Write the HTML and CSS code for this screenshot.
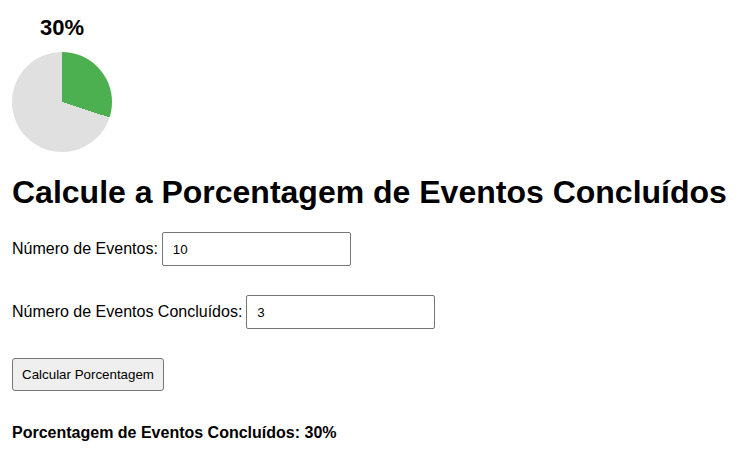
FILE: index.html
```html
<!DOCTYPE html>
<html lang="pt">
<head>
<meta charset="utf-8">
<title>Porcentagem de Eventos</title>
<link rel="stylesheet" href="styles.css">
</head>
<body>
<div class="chart">
  <div class="chart-label">30%</div>
  <div class="pie" style="background: conic-gradient(#4caf50 0 30%, #e0e0e0 30% 100%);"></div>
</div>
<h1 class="title">Calcule a Porcentagem de Eventos Concluídos</h1>
<div class="form">
  <div class="row">
    <label class="label" for="total">Número de Eventos:</label>
    <input class="field" id="total" type="number" value="10">
  </div>
  <div class="row">
    <label class="label" for="done">Número de Eventos Concluídos:</label>
    <input class="field" id="done" type="number" value="3">
  </div>
  <div class="row">
    <button class="btn" type="button">Calcular Porcentagem</button>
  </div>
</div>
<p class="result">Porcentagem de Eventos Concluídos: 30%</p>
</body>
</html>
```
FILE: styles.css
```css
html, body {
  background: #ffffff;
}
body {
  margin: 0;
  padding: 15px 12px 0;
  font-family: "Liberation Sans", Arial, sans-serif;
  color: #000;
}
.chart {
  width: 100px;
  display: flex;
  flex-direction: column;
  align-items: center;
}
.chart-label {
  font-size: 22px;
  font-weight: bold;
  line-height: 26px;
  margin-bottom: 11px;
}
.pie {
  width: 100px;
  height: 100px;
  border-radius: 50%;
}
.title {
  font-size: 32px;
  font-weight: bold;
  margin: 22px 0 21px;
  line-height: 37px;
}
.form {
  display: flex;
  flex-direction: column;
  gap: 29px;
}
.row {
  display: flex;
  align-items: center;
  gap: 4px;
}
.label {
  font-size: 16px;
}
.field {
  box-sizing: border-box;
  width: 189px;
  height: 34px;
  padding: 0 10px;
  border: 1px solid #767676;
  border-radius: 2px;
  font-family: "Liberation Sans", Arial, sans-serif;
  font-size: 13.33px;
  color: #000;
  -moz-appearance: textfield;
}
.field::-webkit-inner-spin-button,
.field::-webkit-outer-spin-button {
  -webkit-appearance: none;
  margin: 0;
}
.btn {
  box-sizing: border-box;
  width: 152px;
  height: 33px;
  padding: 0;
  white-space: nowrap;
  text-align: center;
  background: #efefef;
  border: 1px solid #767676;
  border-radius: 3px;
  font-family: "Liberation Sans", Arial, sans-serif;
  font-size: 13.33px;
  color: #000;
}
.result {
  font-size: 16px;
  font-weight: bold;
  margin: 33px 0 0;
}
```
